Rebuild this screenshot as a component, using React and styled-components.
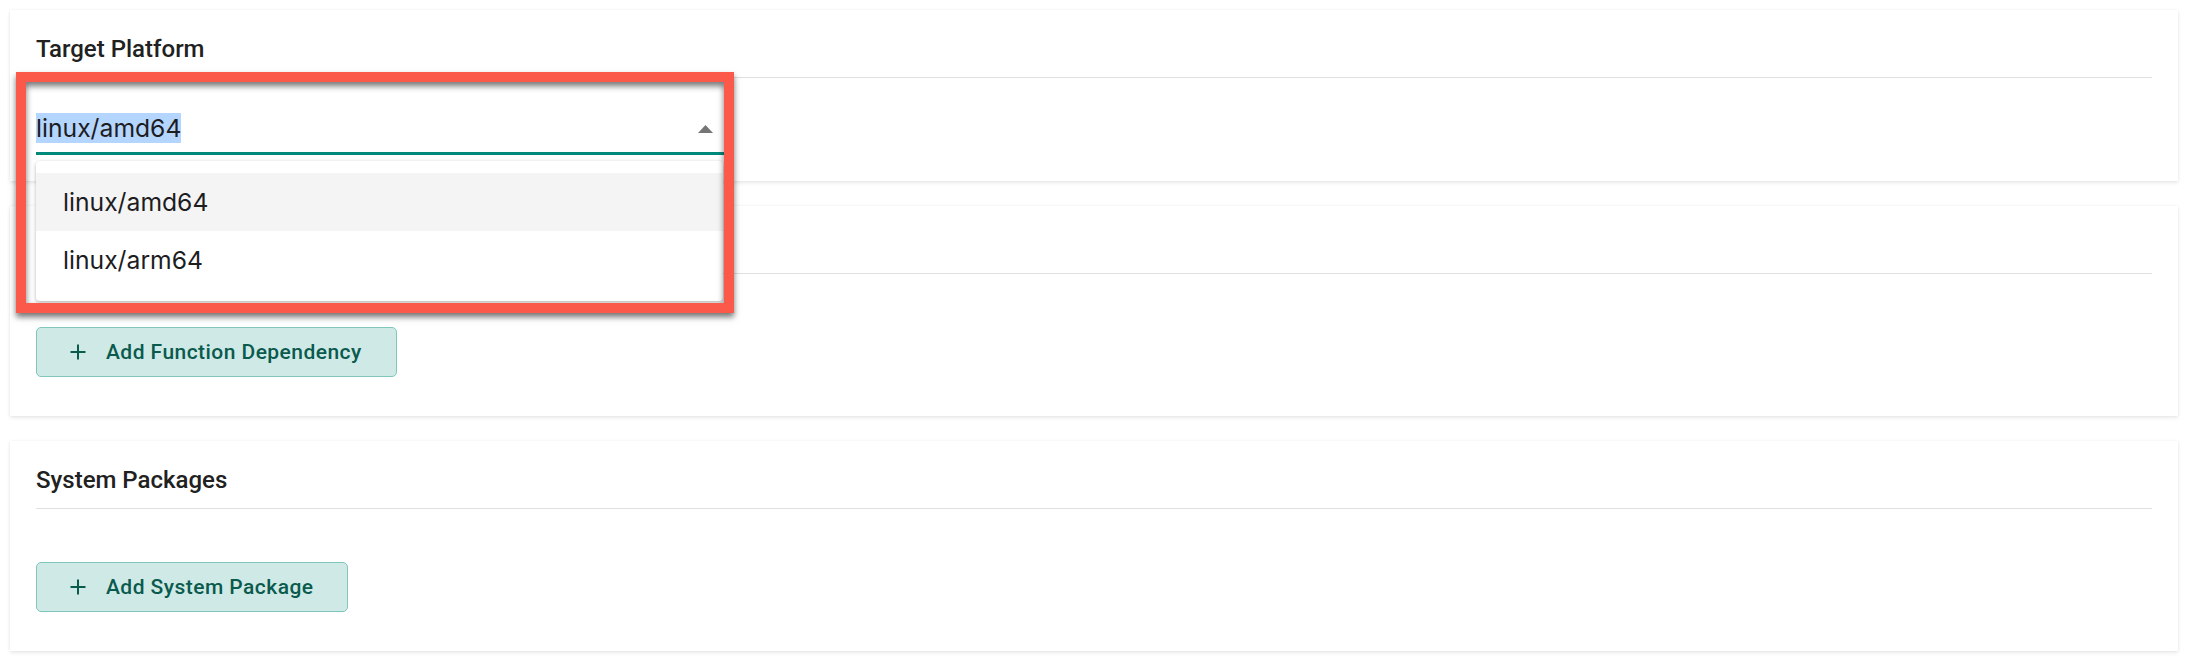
import React from "react";
import styled, { createGlobalStyle } from "styled-components";

const Global = createGlobalStyle`
  html, body { margin: 0; padding: 0; background: #ffffff; }
  body { font-family: Roboto, "Liberation Sans", sans-serif; }
  * { box-sizing: border-box; }
`;

const Page = styled.div`
  position: relative;
  display: flex;
  flex-direction: column;
  gap: 25px;
  padding: 10px 18px 17px 10px;
`;

const Card = styled.section`
  background: #fff;
  padding: 23px 26px ${(p) => p.$bottom}px;
  box-shadow: 0 2px 4px rgba(0, 0, 0, 0.08), 0 0 3px rgba(0, 0, 0, 0.06);
`;

const Title = styled.h2`
  margin: 0;
  min-height: 32px;
  font-family: Roboto, "Liberation Sans", sans-serif;
  font-size: 24px;
  line-height: 32px;
  font-weight: 500;
  color: #212121;
`;

const Divider = styled.hr`
  margin: 12px 0 0;
  border: 0;
  height: 1px;
  background: #e0e0e0;
`;

const SelectField = styled.div`
  position: relative;
  margin-top: 35px;
  width: 688px;
  padding-bottom: 9px;
  border-bottom: 3px solid #00897b;
`;

const SelectValue = styled.div`
  font-family: Inter, "Liberation Sans", sans-serif;
  font-size: 24.7px;
  line-height: 30px;
  color: #1d1d1f;
`;

const Selected = styled.span`
  background: #b4d5fe;
`;

const Arrow = styled.svg`
  position: absolute;
  right: 11px;
  top: 12px;
  width: 15px;
  height: 8px;
`;

const Menu = styled.ul`
  position: absolute;
  left: 0;
  top: 48px;
  width: 687px;
  margin: 0;
  padding: 12px 0;
  list-style: none;
  background: #fff;
  border-radius: 4px;
  box-shadow: 0 2px 4px rgba(0, 0, 0, 0.22), 0 0 3px rgba(0, 0, 0, 0.08);
  z-index: 5;
`;

const Option = styled.li`
  height: 58px;
  display: flex;
  align-items: center;
  padding-left: 27px;
  font-family: Inter, "Liberation Sans", sans-serif;
  font-size: 24.7px;
  color: #1d1d1f;
  background: ${(p) => (p.$active ? "#f4f4f4" : "#fff")};
`;

const AddButton = styled.button`
  margin-top: 53px;
  height: 50px;
  display: inline-flex;
  align-items: center;
  gap: 20px;
  padding: 0 34px 0 33px;
  background: #cfeae6;
  border: 1px solid #80c6bb;
  border-radius: 5px;
  color: #0a5a4e;
  font-family: Roboto, "Liberation Sans", sans-serif;
  font-size: 21px;
  font-weight: 500;
  letter-spacing: 0.45px;
  cursor: pointer;
`;

const PlusIcon = styled.svg`
  width: 16px;
  height: 16px;
  flex: none;
`;

const Annotation = styled.div`
  position: absolute;
  left: 16px;
  top: 72px;
  width: 718px;
  height: 241px;
  border: 10px solid #fb5a4b;
  box-shadow: 0 4px 6px rgba(0, 0, 0, 0.55), inset 0 4px 6px rgba(0, 0, 0, 0.55);
  pointer-events: none;
  z-index: 10;
`;

const Plus = () => (
  <PlusIcon viewBox="0 0 16 16" aria-hidden="true">
    <path d="M8 0.5v15M0.5 8h15" stroke="#0a5a4e" strokeWidth="2" fill="none" />
  </PlusIcon>
);

export default function App() {
  return (
    <>
      <Global />
      <Page>
        <Card $bottom={26}>
          <Title>Target Platform</Title>
          <Divider />
          <SelectField>
            <SelectValue>
              <Selected>linux/amd64</Selected>
            </SelectValue>
            <Arrow viewBox="0 0 15 8" aria-hidden="true">
              <path d="M0 8 L7.5 0 L15 8 Z" fill="#757575" />
            </Arrow>
            <Menu>
              <Option $active>linux/amd64</Option>
              <Option>linux/arm64</Option>
            </Menu>
          </SelectField>
        </Card>
        <Card $bottom={39}>
          <Title aria-hidden="true" />
          <Divider />
          <AddButton>
            <Plus />
            Add Function Dependency
          </AddButton>
        </Card>
        <Card $bottom={39}>
          <Title>System Packages</Title>
          <Divider />
          <AddButton>
            <Plus />
            Add System Package
          </AddButton>
        </Card>
        <Annotation />
      </Page>
    </>
  );
}
